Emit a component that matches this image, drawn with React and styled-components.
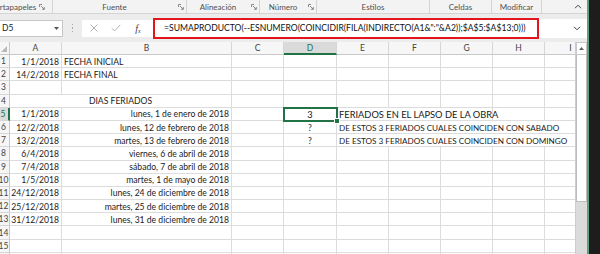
import React from 'react';
import styled, { createGlobalStyle, css } from 'styled-components';

const GREEN = '#217346';
const GRID = '#dcdcdc';
const FONT = `"Lato", "Liberation Sans", sans-serif`;

const Global = createGlobalStyle`
  html, body { margin: 0; padding: 0; background: #fff; overflow: hidden; }
  body { font-family: ${FONT}; }
  #root { width: 600px; height: 254px; overflow: hidden; }
`;

const Window = styled.div`
  display: flex;
  width: 600px;
  height: 254px;
  overflow: hidden;
`;

const Main = styled.div`
  flex: none;
  width: 587px;
  display: flex;
  flex-direction: column;
  overflow: hidden;
`;

const Edge = styled.div`
  flex: 1;
  background: #1d1d1d;
  border-left: 2px solid #62a07b;
`;

/* ---------- ribbon ---------- */
const Ribbon = styled.div`
  flex: none;
  height: 13px;
  display: flex;
  align-items: stretch;
  margin-left: -10px;
  background: #f3f3f3;
  border-bottom: 1px solid #d4d4d4;
`;

const Group = styled.div`
  flex: none;
  width: ${(p) => p.$w}px;
  display: flex;
  align-items: center;
  border-right: 1px solid #d4d4d4;
  padding-right: ${(p) => p.$pr || 0}px;
  box-sizing: border-box;
`;

const GroupLabel = styled.span`
  flex: 1;
  text-align: center;
  font-size: 8px;
  color: #505050;
  white-space: nowrap;
  line-height: 12px;
`;

const Launcher = styled.span`
  flex: none;
  width: 10px;
  display: flex;
  justify-content: center;
  align-items: center;
`;

const RibbonRest = styled.div`
  flex: 1;
  display: flex;
  justify-content: flex-end;
  align-items: center;
  padding-right: 5px;
`;

const LauncherIcon = () => (
  <svg width="6" height="6" viewBox="0 0 6 6">
    <path d="M0.5 3 V0.5 H3 M2 2 L5.3 5.3 M5.3 3 V5.3 H3" stroke="#707070" strokeWidth="0.8" fill="none" />
  </svg>
);

/* ---------- formula bar ---------- */
const FormulaBar = styled.div`
  flex: none;
  height: 28px;
  display: flex;
  align-items: center;
  background: #ececec;
`;

const NameBox = styled.div`
  flex: none;
  width: 71px;
  height: 17px;
  margin-left: -8px;
  box-sizing: border-box;
  background: #fff;
  border: 1px solid #c6c6c6;
  display: flex;
  align-items: center;
  padding: 0 3px 0 9px;
  font-size: 8.5px;
  color: #222;
`;

const NameText = styled.span`
  flex: 1;
`;

const Dots = styled.div`
  flex: none;
  width: 3px;
  margin: 0 8px 0 8px;
  display: flex;
  flex-direction: column;
  gap: 2px;
  align-items: center;
`;

const Dot = styled.span`
  width: 1.5px;
  height: 1.5px;
  background: #a8a8a8;
`;

const FxBox = styled.div`
  flex: none;
  width: 71px;
  height: 17px;
  box-sizing: border-box;
  background: #fff;
  display: flex;
  align-items: center;
  padding-left: 1px;
`;

const FxItem = styled.span`
  flex: none;
  width: 22px;
  display: flex;
  justify-content: center;
  align-items: center;
`;

const FxText = styled.span`
  font-family: "Liberation Serif", serif;
  font-style: italic;
  font-size: 10px;
  color: #444;
  & sub { font-size: 6px; vertical-align: -1px; }
`;

const FormulaField = styled.div`
  flex: 1;
  height: 19px;
  background: #fff;
  display: flex;
  align-items: center;
  padding-right: 6px;
`;

const Highlight = styled.div`
  flex: none;
  width: 386px;
  height: 21px;
  box-sizing: border-box;
  border: 2px solid #e3141b;
  display: flex;
  align-items: center;
  padding-left: 9px;
  font-size: 8.6px;
  color: #111;
  white-space: nowrap;
`;

const Spacer = styled.span`
  flex: 1;
`;

/* ---------- sheet ---------- */
const SheetArea = styled.div`
  flex: 1;
  display: flex;
  overflow: hidden;
  background: #fff;
`;

const SheetClip = styled.div`
  flex: 1;
  overflow: hidden;
`;

const Sheet = styled.div`
  display: grid;
  width: 597px;
  grid-template-columns: 10px 52px 170px 52px 53px repeat(5, 52px);
  grid-template-rows: 13px repeat(16, 13.2px);
`;

const ColHead = styled.div`
  box-sizing: border-box;
  background: ${(p) => (p.$sel ? '#dadada' : '#f6f6f6')};
  border-right: 1px solid #d6d6d6;
  border-bottom: ${(p) => (p.$sel ? `2px solid ${GREEN}` : '1px solid #c8c8c8')};
  color: ${(p) => (p.$sel ? GREEN : '#444')};
  font-size: 8.5px;
  display: flex;
  align-items: center;
  justify-content: center;
`;

const Corner = styled.div`
  box-sizing: border-box;
  background: #f6f6f6;
  border-right: 1px solid #c8c8c8;
  border-bottom: 1px solid #c8c8c8;
  display: flex;
  align-items: flex-end;
  justify-content: flex-end;
  padding: 0 2px 2px 0;
`;

const RowHead = styled.div`
  box-sizing: border-box;
  background: ${(p) => (p.$sel ? '#dadada' : '#f6f6f6')};
  border-right: ${(p) => (p.$sel ? `2px solid ${GREEN}` : '1px solid #c8c8c8')};
  border-bottom: 1px solid #d6d6d6;
  color: ${(p) => (p.$sel ? GREEN : '#444')};
  font-size: 8.5px;
  display: flex;
  align-items: center;
  justify-content: center;
  padding-right: 2px;
  overflow: hidden;
  white-space: nowrap;
`;

const Cell = styled.div`
  position: relative;
  box-sizing: border-box;
  grid-column: span ${(p) => p.$span || 1};
  border-right: 1px solid ${GRID};
  border-bottom: 1px solid ${GRID};
  font-size: ${(p) => p.$size || 8.6}px;
  color: #1a1a1a;
  display: flex;
  align-items: center;
  justify-content: ${(p) => p.$align || 'flex-start'};
  padding: 1px 2px 0;
  white-space: nowrap;
  overflow: visible;
  ${(p) =>
    p.$active &&
    css`
      outline: 2px solid ${GREEN};
      outline-offset: -1px;
      z-index: 2;
      &::after {
        content: '';
        position: absolute;
        right: -4px;
        bottom: -4px;
        width: 4px;
        height: 4px;
        background: ${GREEN};
        border: 1px solid #fff;
      }
    `}
`;

const VScroll = styled.div`
  flex: none;
  width: 12px;
  display: flex;
  flex-direction: column;
  background: #dbdbdb;
  border-left: 1px solid #cdcdcd;
  box-sizing: border-box;
`;

const ScrollBtn = styled.div`
  flex: none;
  height: 13px;
  background: #fff;
  border: 1px solid #c8c8c8;
  box-sizing: border-box;
  display: flex;
  align-items: center;
  justify-content: center;
`;

const Thumb = styled.div`
  flex: none;
  height: 147px;
  background: #fff;
  border: 1px solid #bdbdbd;
  border-top: none;
  box-sizing: border-box;
`;

const COLS = ['A', 'B', 'C', 'D', 'E', 'F', 'G', 'H', 'I'];
const CAPS = 8.15;
const BIG = 9.3;

const long = [
  ['1/1/2018', 'lunes, 1 de enero de 2018'],
  ['12/2/2018', 'lunes, 12 de febrero de 2018'],
  ['13/2/2018', 'martes, 13 de febrero de 2018'],
  ['6/4/2018', 'viernes, 6 de abril de 2018'],
  ['7/4/2018', 'sábado, 7 de abril de 2018'],
  ['1/5/2018', 'martes, 1 de mayo de 2018'],
  ['24/12/2018', 'lunes, 24 de diciembre de 2018'],
  ['25/12/2018', 'martes, 25 de diciembre de 2018'],
  ['31/12/2018', 'lunes, 31 de diciembre de 2018'],
];

const empty = (n, key) =>
  Array.from({ length: n }, (_, i) => <Cell key={`${key}-${i}`} />);

function buildRows() {
  const rows = [];
  for (let r = 1; r <= 16; r++) {
    const cells = [];
    cells.push(
      <RowHead key={`h${r}`} $sel={r === 5}>
        {r}
      </RowHead>
    );
    if (r === 1 || r === 2) {
      cells.push(
        <Cell key="a" $align="flex-end">{r === 1 ? '1/1/2018' : '14/2/2018'}</Cell>,
        <Cell key="b">{r === 1 ? 'FECHA INICIAL' : 'FECHA FINAL'}</Cell>,
        ...empty(7, `r${r}`)
      );
    } else if (r === 4) {
      cells.push(
        <Cell key="ab" $span={2} $align="center">DIAS FERIADOS</Cell>,
        ...empty(7, 'r4')
      );
    } else if (r >= 5 && r <= 13) {
      const [d, l] = long[r - 5];
      cells.push(
        <Cell key="a" $align="flex-end">{d}</Cell>,
        <Cell key="b" $align="flex-end">{l}</Cell>,
        <Cell key="c" />
      );
      if (r === 5) {
        cells.push(
          <Cell key="d" $align="center" $active $size={BIG}>3</Cell>,
          <Cell key="e" $span={3} $size={BIG}>FERIADOS EN EL LAPSO DE LA OBRA</Cell>,
          ...empty(2, 'r5')
        );
      } else if (r === 6) {
        cells.push(
          <Cell key="d" $align="center">?</Cell>,
          <Cell key="e" $span={5} $size={CAPS}>DE ESTOS 3 FERIADOS CUALES COINCIDEN CON SABADO</Cell>
        );
      } else if (r === 7) {
        cells.push(
          <Cell key="d" $align="center">?</Cell>,
          <Cell key="e" $span={5} $size={CAPS}>DE ESTOS 3 FERIADOS CUALES COINCIDEN CON DOMINGO</Cell>
        );
      } else {
        cells.push(...empty(6, `r${r}`));
      }
    } else {
      cells.push(...empty(9, `r${r}`));
    }
    rows.push(<React.Fragment key={r}>{cells}</React.Fragment>);
  }
  return rows;
}

const groups = [
  { w: 63, label: 'Portapapeles', launcher: true, pr: 5 },
  { w: 134, label: 'Fuente', launcher: true },
  { w: 73, label: 'Alineación', launcher: true },
  { w: 57, label: 'Número', launcher: true },
  { w: 113, label: 'Estilos' },
  { w: 62, label: 'Celdas' },
  { w: 50, label: 'Modificar' },
];

export default function App() {
  return (
    <>
      <Global />
      <Window>
        <Main>
          <Ribbon>
            {groups.map((g) => (
              <Group key={g.label} $w={g.w} $pr={g.pr}>
                <GroupLabel>{g.label}</GroupLabel>
                {g.launcher && (
                  <Launcher>
                    <LauncherIcon />
                  </Launcher>
                )}
              </Group>
            ))}
            <RibbonRest>
              <svg width="8" height="5" viewBox="0 0 8 5">
                <path d="M1 4.2 L4 1.2 L7 4.2" stroke="#444" strokeWidth="1" fill="none" />
              </svg>
            </RibbonRest>
          </Ribbon>

          <FormulaBar>
            <NameBox>
              <NameText>D5</NameText>
              <svg width="5" height="3" viewBox="0 0 5 3">
                <path d="M0 0 H5 L2.5 3 Z" fill="#555" />
              </svg>
            </NameBox>
            <Dots>
              <Dot />
              <Dot />
              <Dot />
            </Dots>
            <FxBox>
              <FxItem>
                <svg width="8" height="8" viewBox="0 0 8 8">
                  <path d="M0.5 0.5 L7.5 7.5 M7.5 0.5 L0.5 7.5" stroke="#b4b4b4" strokeWidth="1" />
                </svg>
              </FxItem>
              <FxItem>
                <svg width="10" height="8" viewBox="0 0 10 8">
                  <path d="M0.8 4.2 L3.6 7 L9.2 0.8" stroke="#b4b4b4" strokeWidth="1" fill="none" />
                </svg>
              </FxItem>
              <FxItem>
                <FxText>
                  f<sub>x</sub>
                </FxText>
              </FxItem>
            </FxBox>
            <FormulaField>
              <Highlight>=SUMAPRODUCTO(--ESNUMERO(COINCIDIR(FILA(INDIRECTO(A1&amp;":"&amp;A2));$A$5:$A$13;0)))</Highlight>
              <Spacer />
              <svg width="8" height="5" viewBox="0 0 8 5">
                <path d="M1 0.8 L4 3.8 L7 0.8" stroke="#444" strokeWidth="1" fill="none" />
              </svg>
            </FormulaField>
          </FormulaBar>

          <SheetArea>
            <SheetClip>
              <Sheet>
                <Corner>
                  <svg width="6" height="6" viewBox="0 0 6 6">
                    <path d="M6 0 V6 H0 Z" fill="#b9b9b9" />
                  </svg>
                </Corner>
                {COLS.map((c) => (
                  <ColHead key={c} $sel={c === 'D'}>
                    {c}
                  </ColHead>
                ))}
                {buildRows()}
              </Sheet>
            </SheetClip>
            <VScroll>
              <ScrollBtn>
                <svg width="5" height="3" viewBox="0 0 5 3">
                  <path d="M0 3 H5 L2.5 0 Z" fill="#606060" />
                </svg>
              </ScrollBtn>
              <Thumb />
            </VScroll>
          </SheetArea>
        </Main>
        <Edge />
      </Window>
    </>
  );
}
